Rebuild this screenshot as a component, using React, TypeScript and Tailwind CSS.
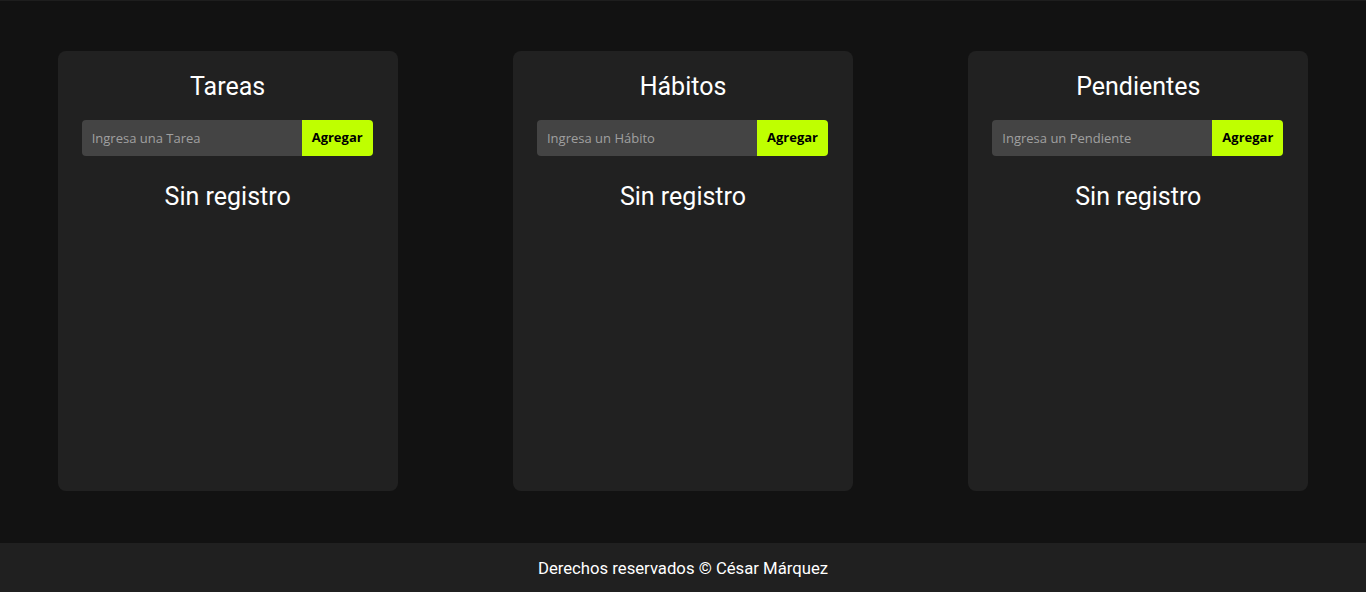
import React from 'react'

const lists = [
  { title: 'Tareas', placeholder: 'Ingresa una Tarea' },
  { title: 'Hábitos', placeholder: 'Ingresa un Hábito' },
  { title: 'Pendientes', placeholder: 'Ingresa un Pendiente' },
]

function Card({ title, placeholder }: { title: string; placeholder: string }) {
  return (
    <div className="w-[340px] h-[440px] rounded-lg bg-[#212121] px-6 pt-[23px] flex flex-col items-center">
      <h2 className="text-[25px] leading-[26px] text-white">{title}</h2>
      <form className="flex w-full mt-5" onSubmit={(e) => e.preventDefault()}>
        <input
          type="text"
          placeholder={placeholder}
          className="h-9 w-[220px] rounded-l bg-[#444444] px-[10px] text-[13px] text-white placeholder:text-[#a0a0a0] outline-none font-['Open_Sans',sans-serif]"
        />
        <button
          type="submit"
          className="h-9 w-[71px] rounded-r bg-[#bfff00] text-[13px] font-bold text-black font-['Open_Sans',sans-serif]"
        >
          Agregar
        </button>
      </form>
      <p className="mt-[27px] text-[25px] leading-7 text-white">Sin registro</p>
    </div>
  )
}

export default function App() {
  return (
    <div className="min-h-[592px] bg-[#121212] font-['Roboto',sans-serif] flex flex-col">
      <main className="h-[543px] border-t border-[#1e1e1e] pt-[50px] flex justify-around">
        {lists.map((l) => (
          <Card key={l.title} title={l.title} placeholder={l.placeholder} />
        ))}
      </main>
      <footer className="h-[49px] pt-[2px] bg-[#202020] flex items-center justify-center text-[16.7px] text-white">
        Derechos reservados © César Márquez
      </footer>
    </div>
  )
}
